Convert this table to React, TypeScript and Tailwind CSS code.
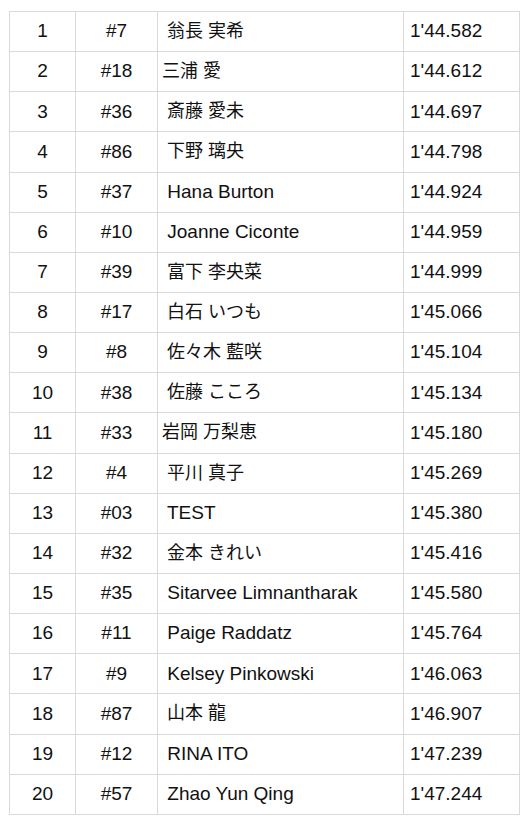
const rows: [number, string, string, string][] = [
  [1, "#7", " 翁長 実希", "1'44.582"],
  [2, "#18", "三浦 愛", "1'44.612"],
  [3, "#36", " 斎藤 愛未", "1'44.697"],
  [4, "#86", " 下野 璃央", "1'44.798"],
  [5, "#37", " Hana Burton", "1'44.924"],
  [6, "#10", " Joanne Ciconte", "1'44.959"],
  [7, "#39", " 富下 李央菜", "1'44.999"],
  [8, "#17", " 白石 いつも", "1'45.066"],
  [9, "#8", " 佐々木 藍咲", "1'45.104"],
  [10, "#38", " 佐藤 こころ", "1'45.134"],
  [11, "#33", "岩岡 万梨恵", "1'45.180"],
  [12, "#4", " 平川 真子", "1'45.269"],
  [13, "#03", " TEST", "1'45.380"],
  [14, "#32", " 金本 きれい", "1'45.416"],
  [15, "#35", " Sitarvee Limnantharak", "1'45.580"],
  [16, "#11", " Paige Raddatz", "1'45.764"],
  [17, "#9", " Kelsey Pinkowski", "1'46.063"],
  [18, "#87", " 山本 龍", "1'46.907"],
  [19, "#12", " RINA ITO", "1'47.239"],
  [20, "#57", " Zhao Yun Qing", "1'47.244"],
];

const isLatin = (s: string) => /^[\x00-\x7f]+$/.test(s);

export default function App() {
  return (
    <div className="bg-white pt-[11px] pl-[9px] font-['Liberation_Sans','Noto_Sans_CJK_JP',sans-serif] text-[19px] text-[#111]">
      <table className="w-[511px] table-fixed border-collapse">
        <colgroup>
          <col className="w-[66px]" />
          <col className="w-[82px]" />
          <col className="w-[246px]" />
          <col />
        </colgroup>
        <tbody>
          {rows.map(([pos, num, name, time]) => (
            <tr key={pos} className="h-[40.15px]">
              <td className="border border-[#d9d9d9] p-0 text-center">{pos}</td>
              <td className="border border-[#d9d9d9] p-0 text-center">{num}</td>
              <td
                className={
                  isLatin(name)
                    ? "border border-[#d9d9d9] py-0 pl-[4px] whitespace-pre"
                    : "border border-[#d9d9d9] py-0 pl-[4px] whitespace-pre text-[18px]"
                }
              >
                {name}
              </td>
              <td className="border border-[#d9d9d9] py-0 pl-[6px]">{time}</td>
            </tr>
          ))}
        </tbody>
      </table>
    </div>
  );
}
